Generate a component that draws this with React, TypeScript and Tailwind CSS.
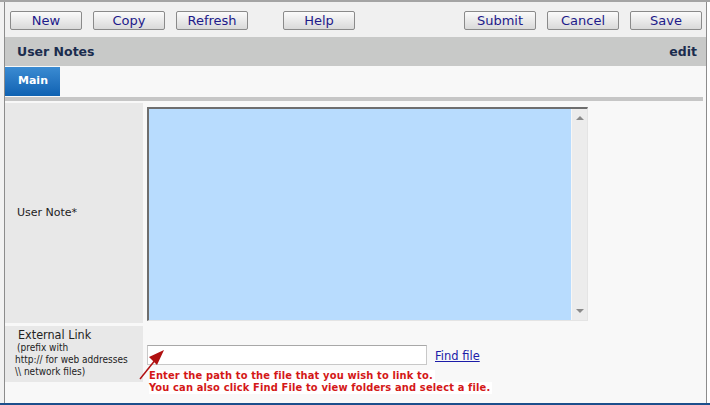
import React from "react";

const btn =
  "h-[19px] w-[72px] rounded-[2px] border border-[#8a8a8a] bg-gradient-to-b from-[#fbfbfb] to-[#d9d9d9] text-[13px] leading-[17px] text-[#1d1a8a] text-center";

export default function App() {
  const font = { fontFamily: '"DejaVu Sans", Verdana, sans-serif' };
  const cond = { fontFamily: '"DejaVu Sans Condensed", "DejaVu Sans", sans-serif' };
  return (
    <div
      className="relative w-[710px] h-[405px] overflow-hidden bg-[#f4f4f4] border-t-2 border-[#a4a4a4] border-b-2 border-b-[#1c4f8c] flex"
      style={font}
    >
      <div className="w-[4px] shrink-0 bg-[#f2f2f2]" />
      <div className="w-[703px] shrink-0 border-l border-r border-[#8c8c8c] flex flex-col bg-[#f8f8f8]">
        {/* toolbar */}
        <div className="h-[35px] bg-[#f0f0f0] flex items-start pt-[9px] pl-[5px]">
          <div className="flex gap-[11px]">
            <button className={btn}>New</button>
            <button className={btn}>Copy</button>
            <button className={btn}>Refresh</button>
          </div>
          <button className={btn + " ml-[35px]"}>Help</button>
          <div className="flex gap-[11px] ml-auto mr-[4px]">
            <button className={btn}>Submit</button>
            <button className={btn}>Cancel</button>
            <button className={btn}>Save</button>
          </div>
        </div>
        {/* header */}
        <div className="h-[29px] bg-[#c8c9c8] flex items-center justify-between pl-[12px] pr-[9px] pt-[1px]">
          <span className="text-[12.5px] font-bold text-[#1b2c4e]">User Notes</span>
          <span className="text-[12.5px] font-bold text-[#1b2c4e]">edit</span>
        </div>
        {/* tabs */}
        <div className="h-[31px] bg-[#f8f8f8] pt-[1px]">
          <div className="w-[55px] h-[29px] bg-gradient-to-b from-[#3a8bd2] to-[#0e62b2] text-white font-bold text-[11px] flex items-center pl-[13px]">
            Main
          </div>
        </div>
        <div className="h-[4px] bg-[#c6c6c6] mr-[3px]" />
        {/* content */}
        <div className="flex-1 flex flex-col pt-[2px] gap-[3px]">
          <div className="flex h-[220px]">
            <div className="w-[138px] bg-[#e8e8e8] flex items-center pl-[12px] text-[11px] text-[#222]">
              User Note*
            </div>
            <div className="pl-[4px] pt-[4px]">
              <div className="w-[441px] h-[214px] flex border-t-2 border-l-2 border-[#6e6e6e] border-r border-b border-r-[#e4e4e4] border-b-[#e4e4e4]">
                <div className="flex-1 bg-[#b8dcfe]" />
                <div className="w-[16px] bg-[#ececec] flex flex-col justify-between items-center py-[6px] border-l border-[#f6f6f6]">
                  <svg width="8" height="5" viewBox="0 0 8 5"><path d="M0 5 L4 1 L8 5 Z" fill="#8a8a8a" /></svg>
                  <svg width="8" height="5" viewBox="0 0 8 5"><path d="M0 0 L8 0 L4 4 Z" fill="#8a8a8a" /></svg>
                </div>
              </div>
            </div>
          </div>
          <div className="flex items-start">
            <div className="w-[138px] h-[56px] bg-[#e8e8e8] pl-[10px] pt-[2px] text-[#222]" style={cond}>
              <div className="text-[12.5px] leading-[14px] pl-[3px]">External Link</div>
              <div className="text-[10px] leading-[12px] pl-[2px]">(prefix with</div>
              <div className="text-[10px] leading-[12px]">http:// for web addresses</div>
              <div className="text-[10px] leading-[12px]">\\ network files)</div>
            </div>
            <div className="pl-[4px] pt-[18px] flex flex-col">
              <div className="flex items-center">
                <div className="w-[280px] h-[20px] bg-white border border-[#c8c8c8] border-t-[#a8a8a8]" />
                <a className="ml-[8px] text-[11.5px] text-[#1c1ca8] underline mt-[4px]">Find file</a>
              </div>
              <div
                className="mt-[5px] ml-[2px] text-[11px] leading-[12px] font-bold text-[#d41818] tracking-[0.15px]"
                style={cond}
              >
                <div className="bg-white w-fit pr-[2px]">Enter the path to the file that you wish to link to.</div>
                <div className="bg-white w-fit pr-[2px]">You can also click Find File to view folders and select a file.</div>
              </div>
            </div>
          </div>
        </div>
      </div>
      <div className="flex-1 bg-white" />
      <svg className="absolute left-[136px] top-[343px]" width="32" height="40" viewBox="0 0 32 40">
        <line x1="4" y1="34" x2="20" y2="14" stroke="#b01010" strokeWidth="1.5" />
        <path d="M28 5 L13 12 L21 20 Z" fill="#b01010" />
      </svg>
    </div>
  );
}
